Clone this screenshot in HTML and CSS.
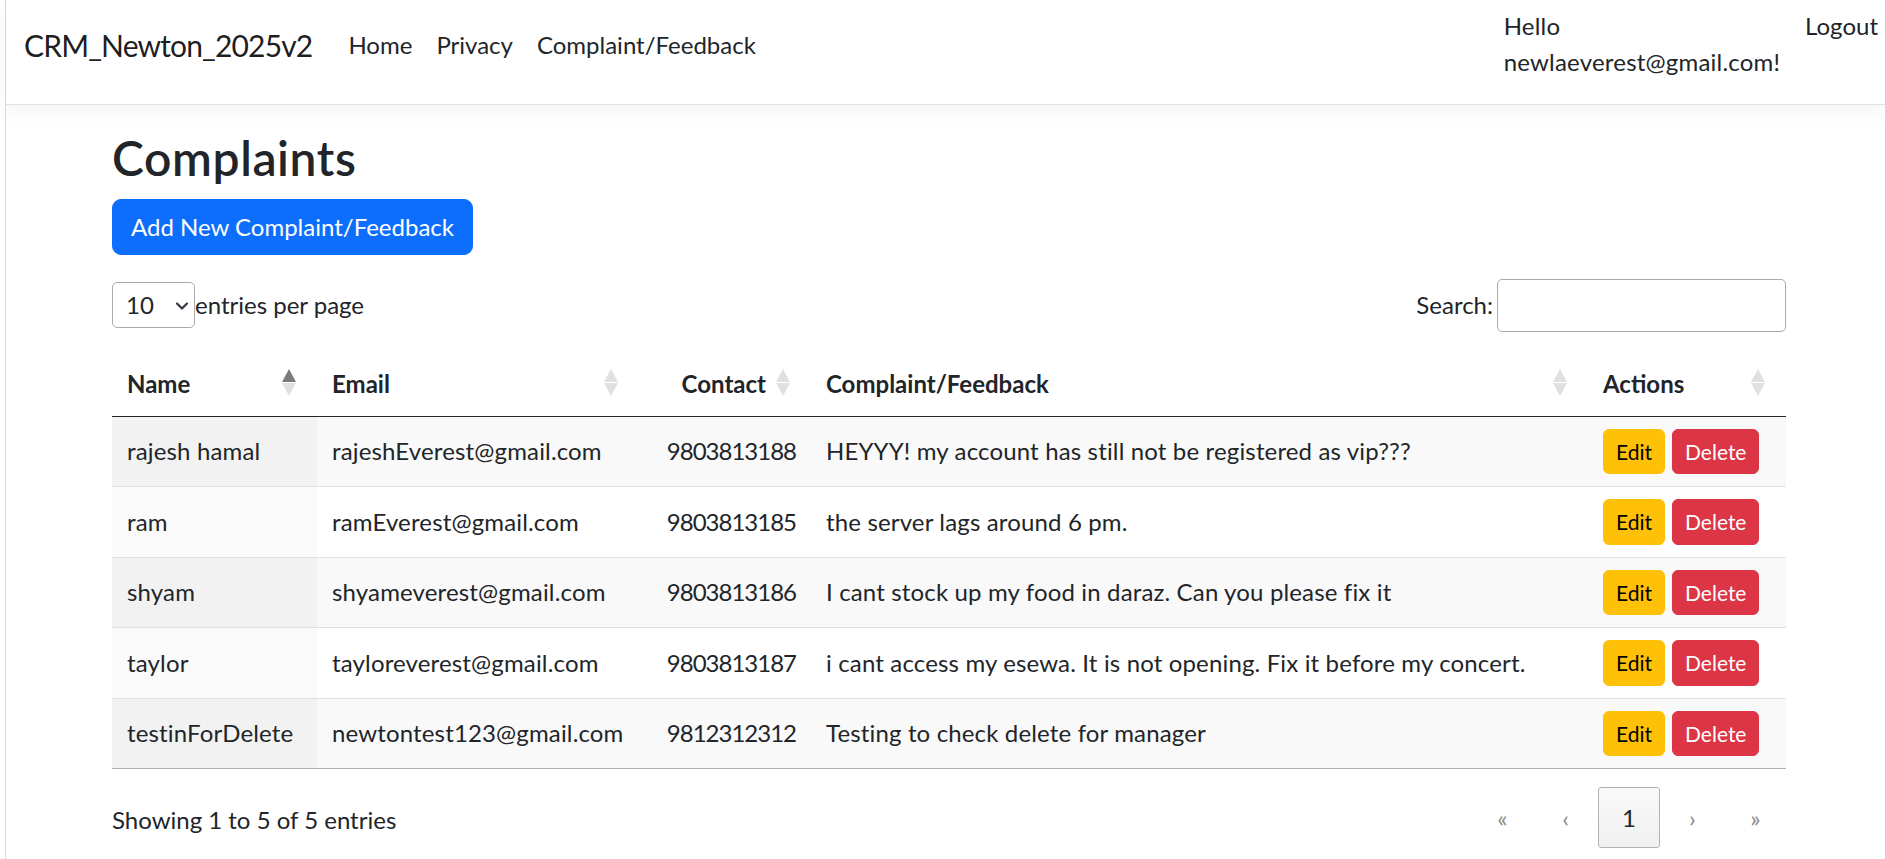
FILE: index.html
```html
<!DOCTYPE html>
<html lang="en">
<head>
<meta charset="utf-8">
<title>Complaints - CRM_Newton_2025v2</title>
<link rel="stylesheet" href="styles.css">
</head>
<body>
<div class="page">
  <header class="navbar">
    <div class="nav-left">
      <a class="brand" href="#">CRM_Newton_2025v2</a>
      <ul class="nav-list">
        <li><a class="nav-link" href="#">Home</a></li>
        <li><a class="nav-link" href="#">Privacy</a></li>
        <li><a class="nav-link" href="#">Complaint/Feedback</a></li>
      </ul>
    </div>
    <ul class="nav-right">
      <li><a class="nav-link hello" href="#">Hello newlaeverest@gmail.com!</a></li>
      <li><button class="nav-link logout" type="button">Logout</button></li>
    </ul>
  </header>

  <main class="main">
    <h2 class="title">Complaints</h2>
    <p class="add-wrap"><a class="btn-add" href="#">Add New Complaint/Feedback</a></p>

    <div class="dt-top">
      <div class="dt-length">
        <div class="select"><span>10</span><svg class="chev" width="12" height="8" viewBox="0 0 12 8"><path d="M1 1.5l5 5 5-5" fill="none" stroke="#343a40" stroke-width="2.2" stroke-linecap="round" stroke-linejoin="round"/></svg></div>
        <span class="length-label">entries per page</span>
      </div>
      <div class="dt-search">
        <span>Search:</span>
        <div class="search-input"></div>
      </div>
    </div>

    <table class="dt">
      <colgroup>
        <col class="c-name"><col class="c-email"><col class="c-contact"><col class="c-text"><col class="c-actions">
      </colgroup>
      <thead>
        <tr>
          <th>Name<span class="order"><i class="up active"></i><i class="down"></i></span></th>
          <th>Email<span class="order"><i class="up"></i><i class="down"></i></span></th>
          <th class="num">Contact<span class="order"><i class="up"></i><i class="down"></i></span></th>
          <th>Complaint/Feedback<span class="order"><i class="up"></i><i class="down"></i></span></th>
          <th>Actions<span class="order"><i class="up"></i><i class="down"></i></span></th>
        </tr>
      </thead>
      <tbody>
        <tr class="odd">
          <td class="sorted">rajesh hamal</td><td>rajeshEverest@gmail.com</td><td class="num">9803813188</td>
          <td>HEYYY! my account has still not be registered as vip???</td>
          <td><div class="actions"><a class="btn-sm edit" href="#">Edit</a><a class="btn-sm del" href="#">Delete</a></div></td>
        </tr>
        <tr class="even">
          <td class="sorted">ram</td><td>ramEverest@gmail.com</td><td class="num">9803813185</td>
          <td>the server lags around 6 pm.</td>
          <td><div class="actions"><a class="btn-sm edit" href="#">Edit</a><a class="btn-sm del" href="#">Delete</a></div></td>
        </tr>
        <tr class="odd">
          <td class="sorted">shyam</td><td>shyameverest@gmail.com</td><td class="num">9803813186</td>
          <td>I cant stock up my food in daraz. Can you please fix it</td>
          <td><div class="actions"><a class="btn-sm edit" href="#">Edit</a><a class="btn-sm del" href="#">Delete</a></div></td>
        </tr>
        <tr class="even">
          <td class="sorted">taylor</td><td>tayloreverest@gmail.com</td><td class="num">9803813187</td>
          <td>i cant access my esewa. It is not opening. Fix it before my concert.</td>
          <td><div class="actions"><a class="btn-sm edit" href="#">Edit</a><a class="btn-sm del" href="#">Delete</a></div></td>
        </tr>
        <tr class="odd last">
          <td class="sorted">testinForDelete</td><td>newtontest123@gmail.com</td><td class="num">9812312312</td>
          <td>Testing to check delete for manager</td>
          <td><div class="actions"><a class="btn-sm edit" href="#">Edit</a><a class="btn-sm del" href="#">Delete</a></div></td>
        </tr>
      </tbody>
    </table>

    <div class="dt-bottom">
      <div class="dt-info">Showing 1 to 5 of 5 entries</div>
      <nav class="paging">
        <span class="pg">«</span>
        <span class="pg">‹</span>
        <span class="pg current">1</span>
        <span class="pg">›</span>
        <span class="pg">»</span>
      </nav>
    </div>
  </main>
</div>
</body>
</html>
```

FILE: styles.css
```css
* { box-sizing: border-box; }
html, body { margin: 0; padding: 0; overflow: hidden; background: #fff; }
body {
  font-family: Lato, "Noto Sans", sans-serif;
  font-size: 24px;
  line-height: 36px;
  color: #212529;
}
ul { list-style: none; margin: 0; padding: 0; }
a { text-decoration: none; color: inherit; }

.page {
  margin-left: 5px;
  border-left: 1px solid #dcdcdc;
  min-height: 859px;
}

/* navbar */
.navbar {
  display: flex;
  height: 105px;
  padding-left: 18px;
  border-bottom: 1px solid #dee2e6;
  box-shadow: 0 6px 18px rgba(0, 0, 0, .05);
  margin-bottom: 24px;
}
.nav-left {
  display: flex;
  align-items: center;
  align-self: center;
  margin-bottom: 14px;
}
.brand {
  font-size: 30px;
  line-height: 45px;
  letter-spacing: -0.85px;
  color: rgba(0, 0, 0, .9);
  margin-right: 24px;
}
.nav-list { display: flex; }
.nav-link {
  display: block;
  padding: 0 12px;
  color: #212529;
  font: inherit;
  line-height: 36px;
}
.nav-right {
  display: flex;
  align-items: flex-start;
  margin-left: auto;
  margin-right: -6px;
  padding-top: 8px;
}
.hello { width: min-content; letter-spacing: 0.2px; }
.logout {
  background: none;
  border: 1px solid transparent;
  padding: 0 12px;
  line-height: 34px;
  cursor: pointer;
}

/* main */
.main { width: 1674px; margin-left: 106px; }
.title {
  font-size: 48px;
  font-weight: 600;
  line-height: 57.6px;
  letter-spacing: 0.6px;
  margin: 0 0 12px;
}
.add-wrap { margin: 0 0 24px; }
.btn-add {
  display: inline-block;
  padding: 9px 18px;
  border: 1px solid #0d6efd;
  border-radius: 9px;
  background: #0d6efd;
  color: #fff;
  line-height: 36px;
}

.dt-top {
  display: flex;
  justify-content: space-between;
  align-items: center;
  height: 53px;
  margin-bottom: 18px;
}
.dt-length { display: flex; align-items: center; }
.select {
  width: 83px;
  height: 46px;
  border: 1px solid #aaa;
  border-radius: 5px;
  display: flex;
  align-items: center;
  justify-content: space-between;
  padding: 0 6px 0 13px;
}
.chev { display: block; margin-top: 2px; }
.dt-search { display: flex; align-items: center; gap: 4px; }
.search-input {
  width: 289px;
  height: 53px;
  border: 1px solid #aaa;
  border-radius: 5px;
}

/* table */
.dt {
  width: 1674px;
  table-layout: fixed;
  border-collapse: separate;
  border-spacing: 0;
}
.c-name { width: 205px; }
.c-email { width: 322px; }
.c-contact { width: 172px; }
.c-text { width: 777px; }
.c-actions { width: 198px; }
.dt th {
  position: relative;
  text-align: left;
  font-weight: 700;
  line-height: 36px;
  padding: 16px 45px 14px 15px;
  border-bottom: 1px solid #212529;
  white-space: nowrap;
}
.dt th.num, .dt td.num { text-align: right; }
.order {
  position: absolute;
  right: 20px;
  top: 0;
  bottom: 0;
  width: 15px;
  display: flex;
  flex-direction: column;
  justify-content: center;
  gap: 1px;
}
.order i {
  display: block;
  width: 0;
  height: 0;
  border-left: 7.5px solid transparent;
  border-right: 7.5px solid transparent;
}
.order .up { border-bottom: 13px solid #e0e0e0; }
.order .down { border-top: 13px solid #e0e0e0; }
.order .up.active { border-bottom-color: #7b7b7b; }

.dt td {
  padding: 12px 15px;
  line-height: 36px;
  letter-spacing: 0.15px;
  border-bottom: 1px solid #dee2e6;
  vertical-align: middle;
  white-space: nowrap;
}
.dt td.num { letter-spacing: -1px; }
.dt tr.odd td { background: #f9f9f9; }
.dt tr.odd td.sorted { background: #f2f2f2; }
.dt tr.even td.sorted { background: #fafafa; }
.dt tr.last td { border-bottom-color: #b3b3b3; }

.actions { display: flex; gap: 7px; letter-spacing: 0; }
.btn-sm {
  display: block;
  font-size: 21px;
  line-height: 31.5px;
  padding: 6px 12px;
  border: 1px solid;
  border-radius: 6px;
}
.edit { background: #ffc107; border-color: #ffc107; color: #000; }
.del { background: #dc3545; border-color: #dc3545; color: #fff; }

.dt-bottom {
  display: flex;
  justify-content: space-between;
  align-items: center;
  margin-top: 18px;
}
.dt-info { margin-top: 5px; }
.paging { display: flex; }
.pg {
  width: 61px;
  height: 61px;
  margin-left: 2px;
  display: flex;
  align-items: center;
  justify-content: center;
  color: #8a8a8a;
  border: 1px solid transparent;
  border-radius: 3px;
}
.pg.current {
  width: 62px;
  color: #212529;
  border-color: #b3b3b3;
  background: linear-gradient(to bottom, #f9f9f9 0%, #f0f0f0 100%);
}
```
